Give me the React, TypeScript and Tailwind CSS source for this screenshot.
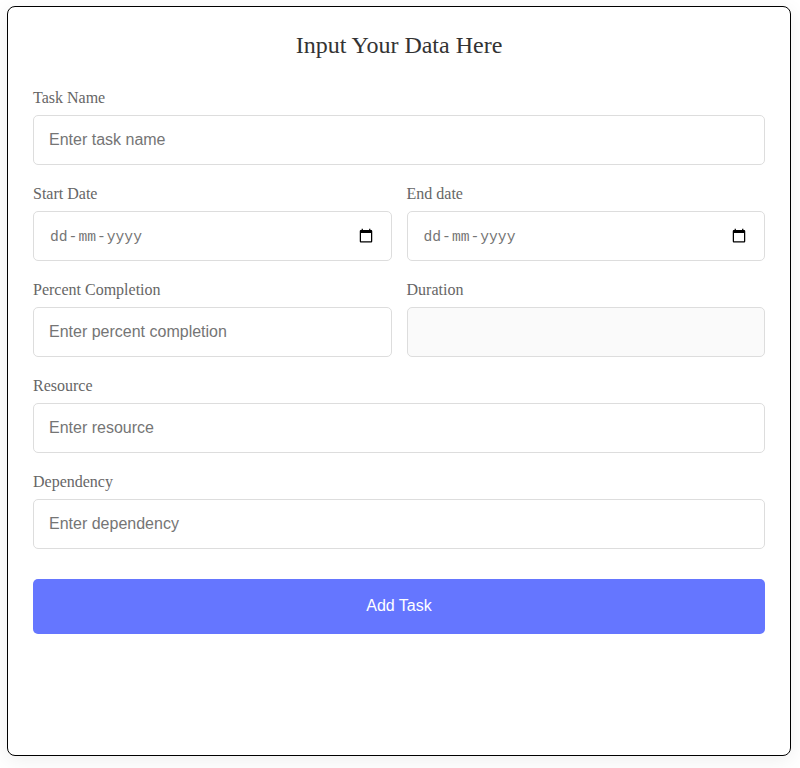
import type { ReactNode } from "react";

const fieldBox =
  "flex h-[50px] w-full items-center rounded-[5px] border border-[#dddddd] px-[15px] font-['Liberation_Sans',sans-serif] text-base text-black outline-none placeholder:text-[#757575]";

function Field({ label, children }: { label: string; children: ReactNode }) {
  return (
    <label className="flex min-w-0 flex-1 flex-col">
      <span className="h-[26px] text-base leading-[18px] text-[#666666]">{label}</span>
      {children}
    </label>
  );
}

function DateBox() {
  return (
    <div className={`${fieldBox} justify-between bg-white`}>
      <div className="flex pt-[2px] font-['Liberation_Mono',monospace] text-[14.67px] leading-[18px] text-[#757575]">
        <span className="px-px">dd</span>
        <span>-</span>
        <span className="px-px">mm</span>
        <span>-</span>
        <span className="px-px">yyyy</span>
      </div>
      <svg className="mr-[2px] mb-[2px]" width="16" height="15" viewBox="0 0 24 24" fill="black">
        <path d="M20 3h-1V1h-2v2H7V1H5v2H4c-1.1 0-2 .9-2 2v16c0 1.1.9 2 2 2h16c1.1 0 2-.9 2-2V5c0-1.1-.9-2-2-2zm0 18H4V8h16v13z" />
      </svg>
    </div>
  );
}

export default function App() {
  return (
    <main className="h-[768px] w-[800px] overflow-hidden bg-white px-[7px] pt-[6px] font-['Liberation_Serif',serif]">
      <section className="h-[750px] w-[784px] rounded-lg border border-black bg-white px-[25px] pt-[25px] shadow-[0_4px_20px_rgba(0,0,0,0.07)]">
        <h1 className="text-center text-2xl leading-[27px] text-[#333333]">Input Your Data Here</h1>
        <form className="mt-[30px] flex flex-col gap-5">
          <Field label="Task Name">
            <input className={fieldBox} placeholder="Enter task name" />
          </Field>
          <div className="flex gap-[15px]">
            <Field label="Start Date"><DateBox /></Field>
            <Field label="End date"><DateBox /></Field>
          </div>
          <div className="flex gap-[15px]">
            <Field label="Percent Completion">
              <input className={fieldBox} placeholder="Enter percent completion" />
            </Field>
            <Field label="Duration">
              <input className={`${fieldBox} bg-[#fafafa]`} readOnly />
            </Field>
          </div>
          <Field label="Resource">
            <input className={fieldBox} placeholder="Enter resource" />
          </Field>
          <Field label="Dependency">
            <input className={fieldBox} placeholder="Enter dependency" />
          </Field>
          <button type="button" className="mt-[10px] h-[55px] w-full rounded-[5px] bg-[#6576ff] pb-[2px] font-['Liberation_Sans',sans-serif] text-base text-white">
            Add Task
          </button>
        </form>
      </section>
    </main>
  );
}
